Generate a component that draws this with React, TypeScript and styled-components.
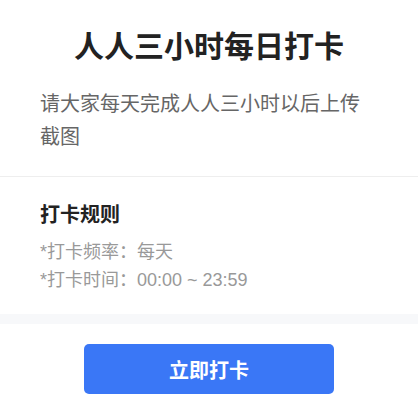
import React from 'react';
import styled, { createGlobalStyle } from 'styled-components';

const GlobalStyle = createGlobalStyle`
  html, body {
    margin: 0;
    padding: 0;
    background: #fff;
  }
  body {
    font-family: "Noto Sans", "Noto Sans CJK SC", sans-serif;
  }
`;

const rules = ['*打卡频率：每天', '*打卡时间：00:00 ~ 23:59'];

export default function App() {
  return (
    <>
      <GlobalStyle />
      <Page>
        <Intro>
          <Title>人人三小时每日打卡</Title>
          <Desc>请大家每天完成人人三小时以后上传截图</Desc>
        </Intro>
        <Rules>
          <RulesTitle>打卡规则</RulesTitle>
          <RuleList>
            {rules.map((r) => (
              <RuleItem key={r}>{r}</RuleItem>
            ))}
          </RuleList>
        </Rules>
        <Band />
        <Footer>
          <PrimaryButton>立即打卡</PrimaryButton>
        </Footer>
      </Page>
    </>
  );
}

const Page = styled.div`
  width: 418px;
  display: flex;
  flex-direction: column;
  background: #fff;
`;

const Intro = styled.div`
  padding: 26px 40px 23px;
  border-bottom: 1px solid #eeeeee;
  display: flex;
  flex-direction: column;
  gap: 21px;
`;

const Title = styled.h1`
  margin: 0;
  font-size: 30px;
  line-height: 40px;
  font-weight: 700;
  color: #222;
  text-align: center;
`;

const Desc = styled.p`
  margin: 0;
  font-size: 20px;
  line-height: 33px;
  color: #666;
  padding-right: 18px;
`;

const Rules = styled.div`
  padding: 24px 40px 20px;
  display: flex;
  flex-direction: column;
  gap: 9px;
`;

const RulesTitle = styled.h2`
  margin: 0;
  font-size: 20px;
  line-height: 28px;
  font-weight: 700;
  color: #222;
`;

const RuleList = styled.div`
  display: flex;
  flex-direction: column;
`;

const RuleItem = styled.div`
  font-family: "Liberation Sans", "Noto Sans CJK SC", sans-serif;
  font-size: 18px;
  line-height: 28px;
  color: #999;
`;

const Band = styled.div`
  height: 10px;
  background: #f7f8fa;
`;

const Footer = styled.div`
  padding: 20px 0 21px;
  display: flex;
  justify-content: center;
`;

const PrimaryButton = styled.button`
  width: 250px;
  height: 50px;
  border: none;
  border-radius: 5px;
  background: #3a77f6;
  color: #fff;
  font-family: "Noto Sans CJK SC", sans-serif;
  font-size: 20px;
  font-weight: 700;
  cursor: pointer;
`;
